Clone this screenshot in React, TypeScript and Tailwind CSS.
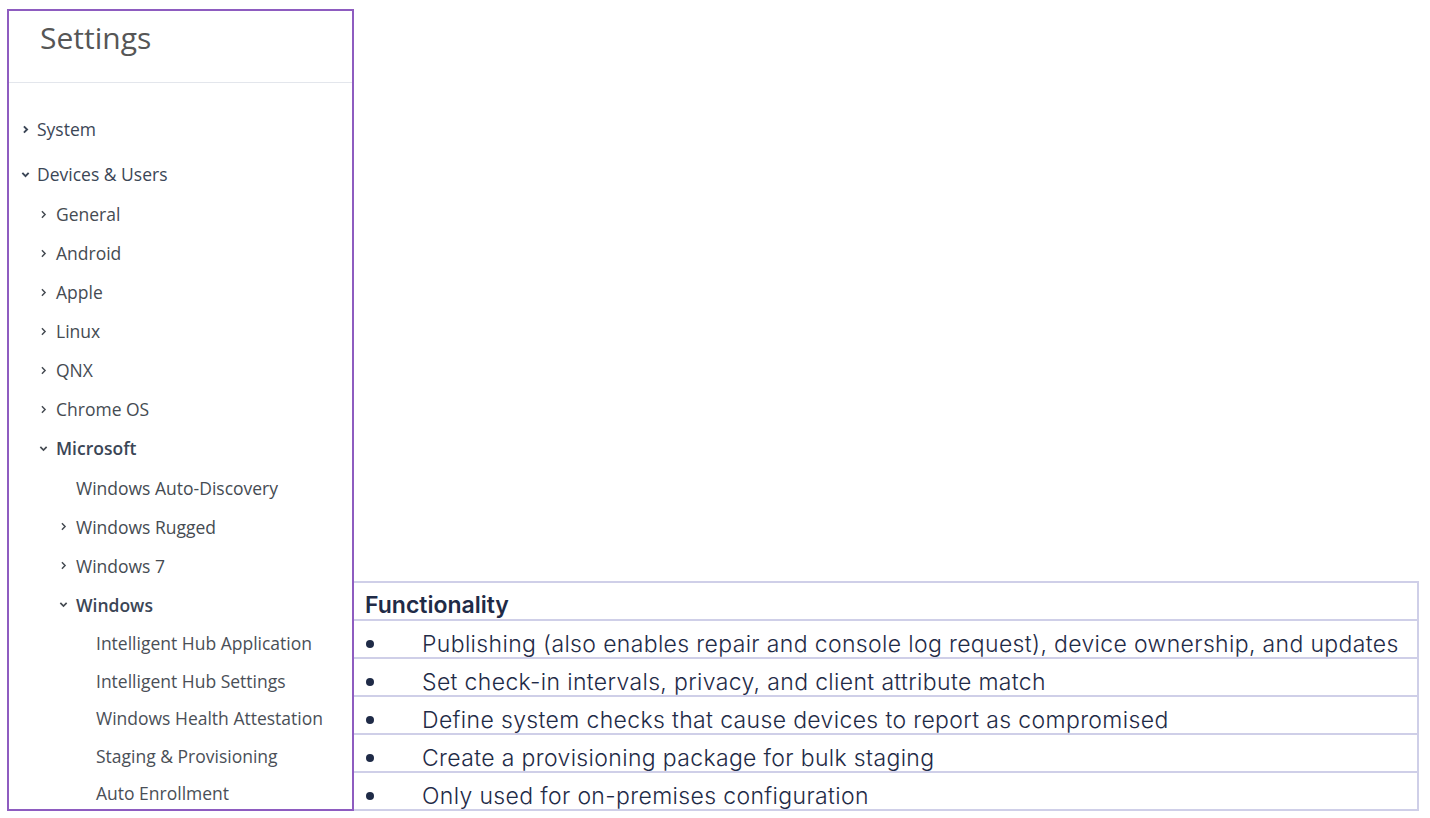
import React from "react"

type Item = { label: string; level: number; chevron?: "right" | "down"; bold?: boolean }

const items: Item[] = [
  { label: "General", level: 1, chevron: "right" },
  { label: "Android", level: 1, chevron: "right" },
  { label: "Apple", level: 1, chevron: "right" },
  { label: "Linux", level: 1, chevron: "right" },
  { label: "QNX", level: 1, chevron: "right" },
  { label: "Chrome OS", level: 1, chevron: "right" },
  { label: "Microsoft", level: 1, chevron: "down", bold: true },
  { label: "Windows Auto-Discovery", level: 2 },
  { label: "Windows Rugged", level: 2, chevron: "right" },
  { label: "Windows 7", level: 2, chevron: "right" },
  { label: "Windows", level: 2, chevron: "down", bold: true },
]

const leaves = [
  "Intelligent Hub Application",
  "Intelligent Hub Settings",
  "Windows Health Attestation",
  "Staging & Provisioning",
  "Auto Enrollment",
]

const rows = [
  "Publishing (also enables repair and console log request), device ownership, and updates",
  "Set check-in intervals, privacy, and client attribute match",
  "Define system checks that cause devices to report as compromised",
  "Create a provisioning package for bulk staging",
  "Only used for on-premises configuration",
]

function Chevron({ dir, strong }: { dir: "right" | "down"; strong?: boolean }) {
  return (
    <svg width="9" height="9" viewBox="0 0 8 8" className="shrink-0">
      {dir === "right" ? (
        <path d="M2.6 1.2 L5.4 4 L2.6 6.8" fill="none" stroke="currentColor" strokeWidth={strong ? 1.7 : 1.3} />
      ) : (
        <path d="M1.2 2.6 L4 5.4 L6.8 2.6" fill="none" stroke="currentColor" strokeWidth={strong ? 1.7 : 1.5} />
      )}
    </svg>
  )
}

export default function App() {
  return (
    <div className="flex items-end h-[818px] pl-[7px] pt-[9px] pb-[7px] bg-white">
      {/* Sidebar */}
      <aside
        className="h-full w-[347px] shrink-0 border-2 border-[#8e5cc0] overflow-hidden"
        style={{ fontFamily: '"Open Sans", sans-serif' }}
      >
        <div className="h-[72px] border-b border-[#e3e6ec] pl-[31px] pt-[9px]">
          <h1 className="text-[30px] text-[#565656] leading-[36px]">Settings</h1>
        </div>

        <nav className="pt-[26.5px] text-[17.5px]">
          <div className="h-[39px] flex items-center gap-[7px] pl-[12px] text-[#3b4656]">
            <Chevron dir="right" strong />
            <span className="font-medium">System</span>
          </div>
          <div className="h-[39px] mt-[6px] flex items-center gap-[7px] pl-[12px] text-[#3b4656]">
            <Chevron dir="down" strong />
            <span className="font-medium">Devices &amp; Users</span>
          </div>

          <div className="pt-[1px]">
            {items.map((it) => (
              <div
                key={it.label}
                className={
                  "h-[39.1px] flex items-center text-[#454b52] " +
                  (it.level === 1 ? "pl-[30px]" : "pl-[50px]")
                }
              >
                <span className="w-[17px] flex">{it.chevron && <Chevron dir={it.chevron} />}</span>
                <span className={it.bold ? "font-semibold text-[#3b4656]" : ""}>{it.label}</span>
              </div>
            ))}
          </div>

          {leaves.map((l) => (
            <div key={l} className="h-[37.5px] flex items-center pl-[87px] text-[#4a4f57]">
              {l}
            </div>
          ))}
        </nav>
      </aside>

      {/* Functionality table */}
      <div
        className="flex-1 mr-[11px] border-t-2 border-r-2 border-[#cfcfe8] text-[#1f2b47]"
        style={{ fontFamily: "Inter, sans-serif" }}
      >
        <div className="h-[38px] border-b-2 border-[#cfcfe8] flex items-center pl-[11px] pt-[9px] text-[23px] font-semibold">
          Functionality
        </div>
        {rows.map((r) => (
          <div key={r} className="h-[38px] border-b-2 border-[#cfcfe8] flex items-center pt-[10px] text-[23px] font-light tracking-[0.35px]">
            <span className="w-[68px] pl-[12px] flex">
              <span className="w-[8px] h-[8px] -mt-[1px] rounded-full bg-[#1f2b47]" />
            </span>
            <span className="whitespace-nowrap">{r}</span>
          </div>
        ))}
      </div>
    </div>
  )
}
